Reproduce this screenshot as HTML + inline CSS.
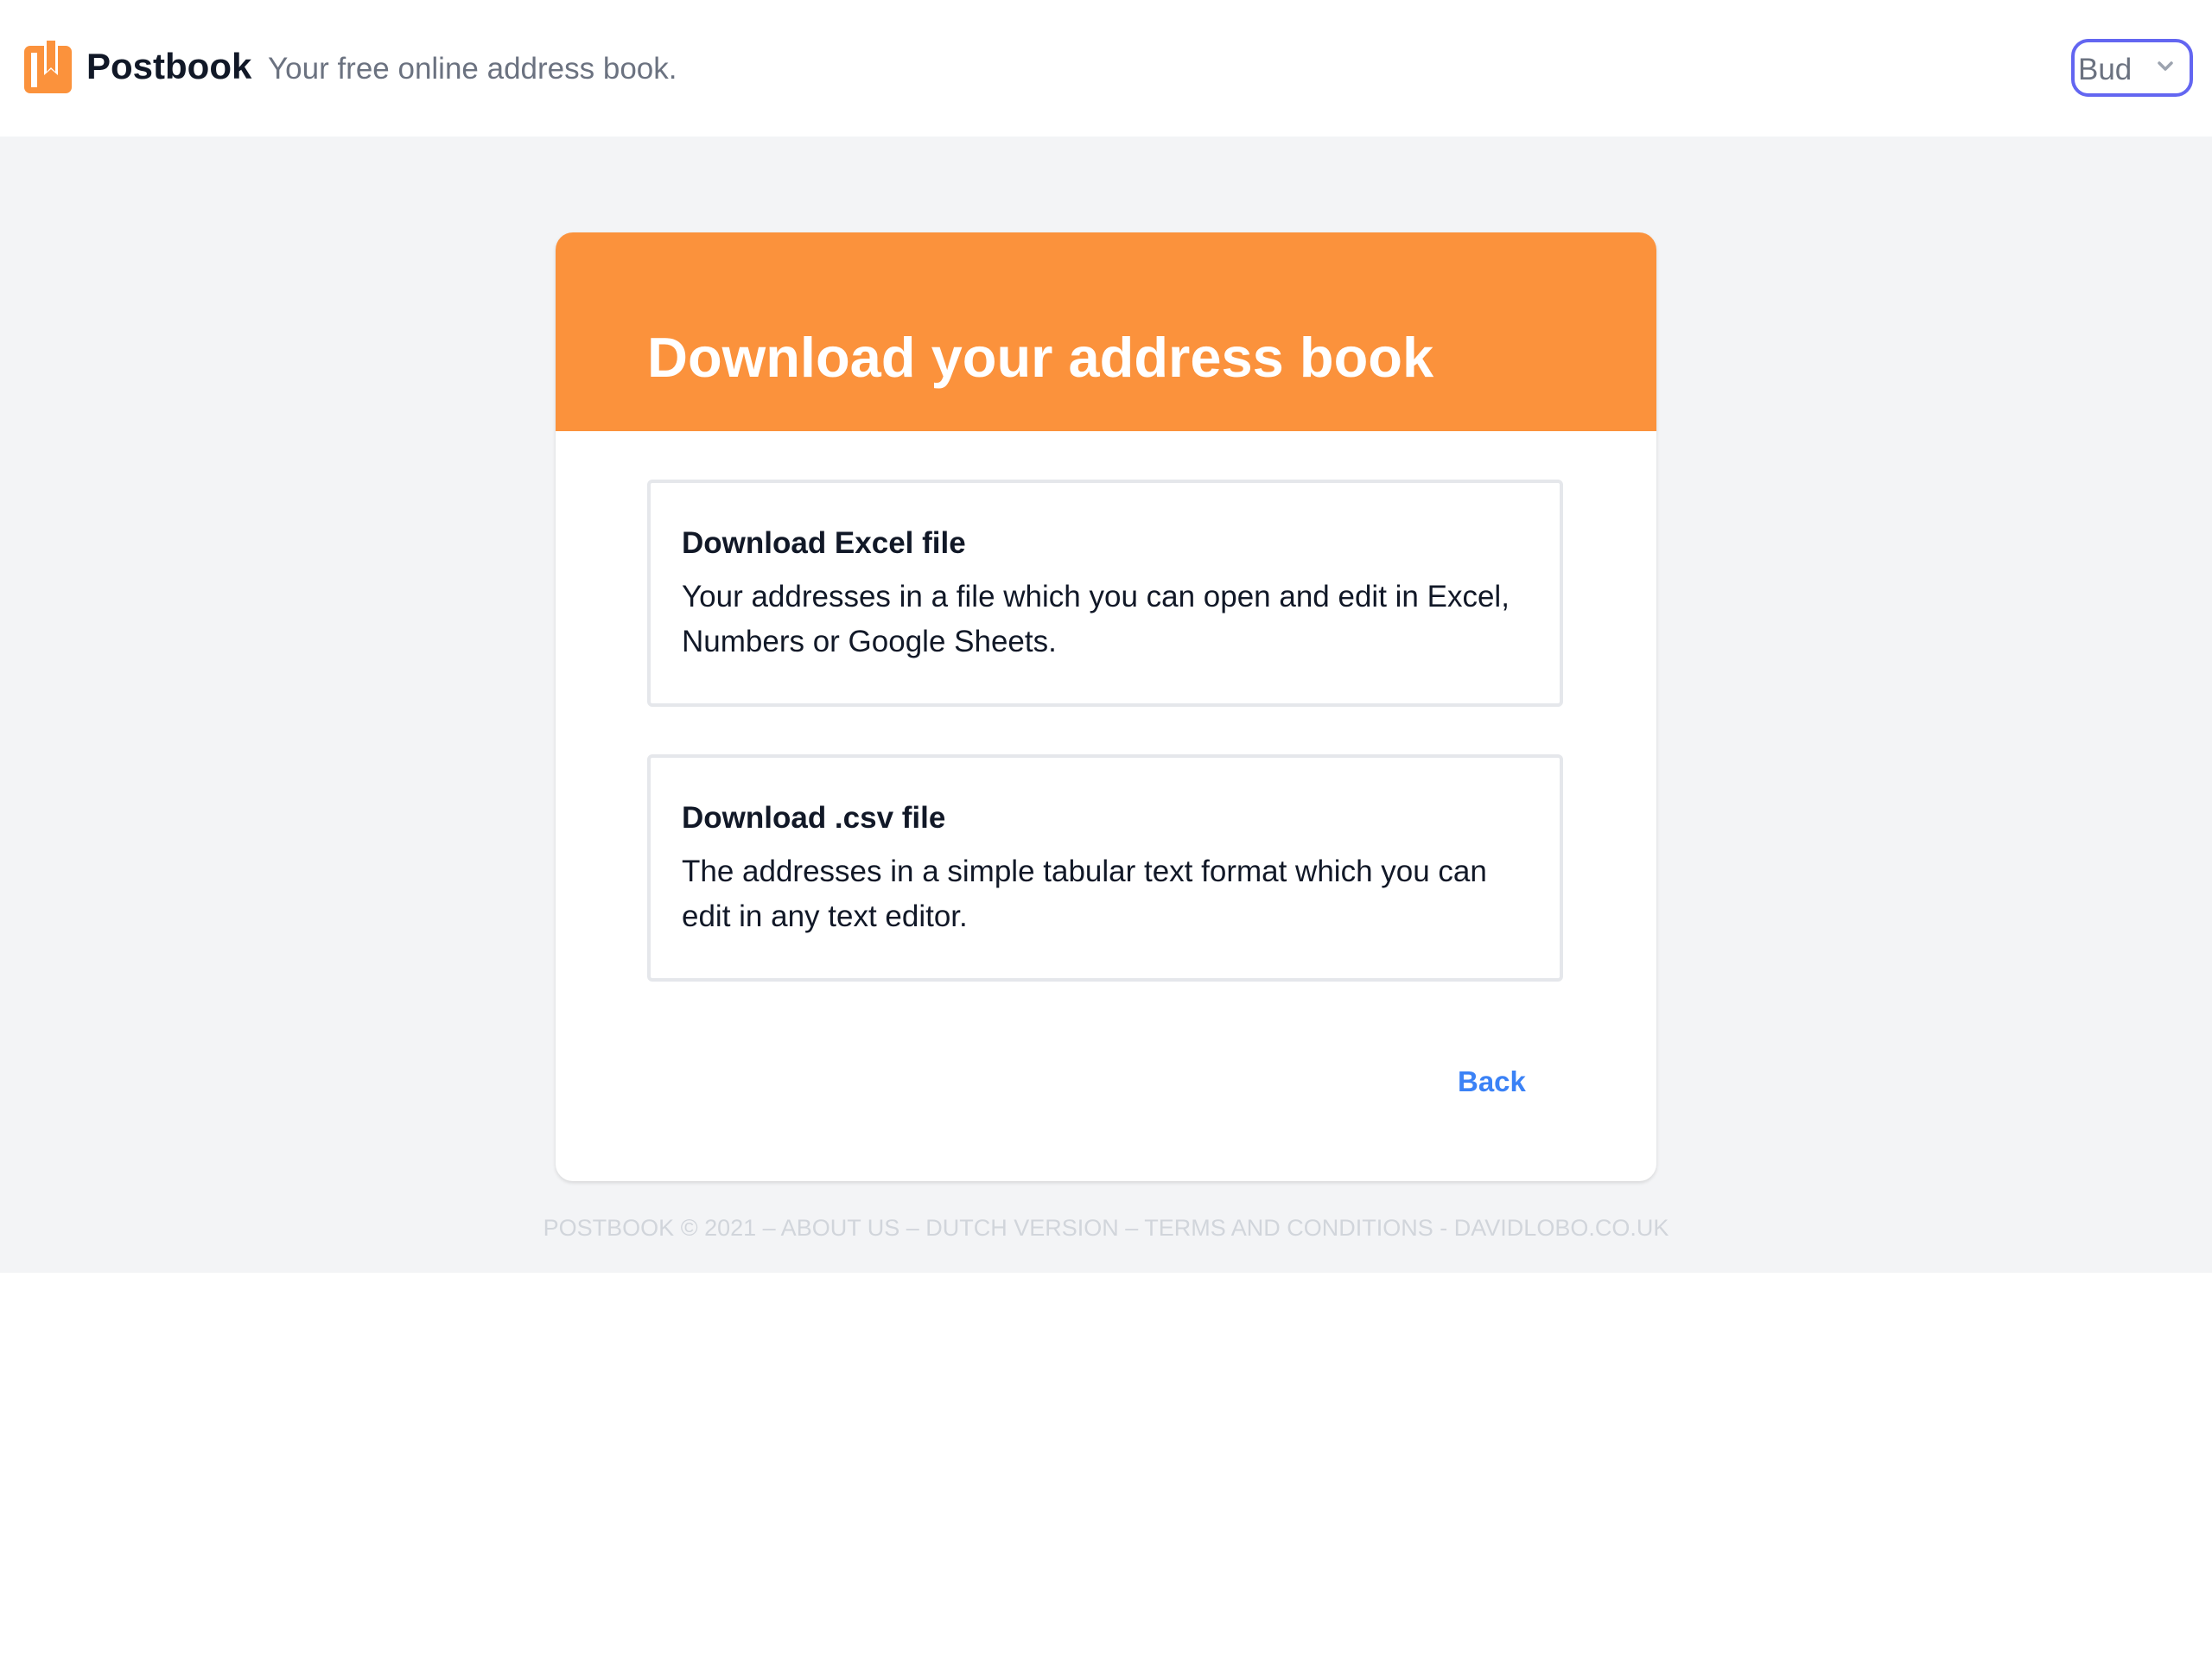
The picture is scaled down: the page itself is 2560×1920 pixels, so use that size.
<!DOCTYPE html>
<html><head><meta charset="utf-8"><style>
*{margin:0;padding:0;box-sizing:border-box}
body{width:2560px;height:1920px;background:#fff;font-family:"Liberation Sans",sans-serif;position:relative;overflow:hidden}
.a{position:absolute;white-space:nowrap;line-height:1}
#gray{position:absolute;left:0;top:158px;width:2560px;height:1315px;background:#f3f4f6}
#card{position:absolute;left:643px;top:269px;width:1274px;height:1098px;background:#fff;border-radius:20px;box-shadow:0 2px 4px rgba(0,0,0,0.12);overflow:hidden}
#ch{position:absolute;left:0;top:0;width:1274px;height:230px;background:#fb923c}
.box{position:absolute;left:749px;width:1060px;height:263px;border:4px solid #e5e7eb;border-radius:6px;background:#fff}
.t{font-weight:bold;font-size:35px;color:#111827}
.b{font-size:35px;color:#111827;line-height:52px}
</style></head><body>
<svg class="a" style="left:28px;top:47px" width="56" height="62" viewBox="0 0 56 62">
<rect x="0" y="6" width="55" height="55" rx="7" fill="#fb923c"/>
<rect x="8" y="14" width="7" height="40" fill="#fff"/>
<path d="M23 6 V40 L31 33 L39 40 V6 Z" fill="#fff"/>
<path d="M26 0 H36 V36 L31 31 L26 36 Z" fill="#fb923c"/>
</svg>
<div class="a" style="left:100px;top:56px;font-size:42px;font-weight:bold;color:#111827">Postbook</div>
<div class="a" style="left:310px;top:62px;font-size:35px;color:#6b7280">Your free online address book.</div>
<div class="a" style="left:2397px;top:45px;width:141px;height:67px;border:4px solid #6366f1;border-radius:20px"></div>
<div class="a" style="left:2405px;top:63px;font-size:35px;color:#6b7280">Bud</div>
<svg class="a" style="left:2496px;top:70px" width="20" height="14" viewBox="0 0 20 14"><path d="M3 3 L10 10 L17 3" stroke="#9ca3af" stroke-width="3.5" fill="none" stroke-linecap="round" stroke-linejoin="round"/></svg>
<div id="gray"></div>
<div id="card"><div id="ch"></div></div>
<div class="a" style="left:749px;top:381px;font-size:65px;font-weight:bold;color:#fff">Download your address book</div>
<div class="box" style="top:555px"></div>
<div class="a t" style="left:789px;top:611px">Download Excel file</div>
<div class="a b" style="left:789px;top:665px">Your addresses in a file which you can open and edit in Excel,<br>Numbers or Google Sheets.</div>
<div class="box" style="top:873px"></div>
<div class="a t" style="left:789px;top:929px">Download .csv file</div>
<div class="a b" style="left:789px;top:983px">The addresses in a simple tabular text format which you can<br>edit in any text editor.</div>
<div class="a" style="left:1687px;top:1235px;font-size:33px;font-weight:bold;color:#3b82f6">Back</div>
<div class="a" style="left:0;width:2560px;text-align:center;top:1408px;font-size:27px;color:#d1d5db">POSTBOOK © 2021 – ABOUT US – DUTCH VERSION – TERMS AND CONDITIONS - DAVIDLOBO.CO.UK</div>
</body></html>
